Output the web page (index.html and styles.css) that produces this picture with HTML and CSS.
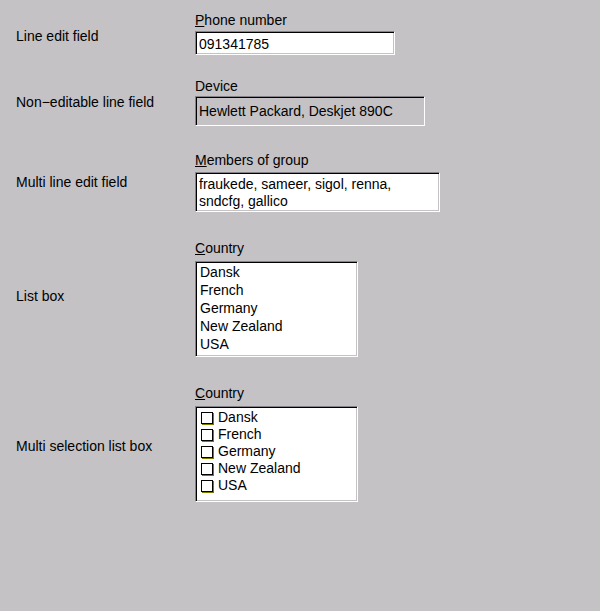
FILE: index.html
```html
<!DOCTYPE html>
<html>
<head>
<meta charset="utf-8">
<link rel="stylesheet" href="styles.css">
</head>
<body>
<div class="form">
  <div class="row">
    <div class="label label-down">Line edit field</div>
    <div class="field">
      <div class="caption cap-1"><u>P</u>hone number</div>
      <div class="sunken edit">091341785</div>
    </div>
  </div>
  <div class="row row-2">
    <div class="label">Non−editable line field</div>
    <div class="field">
      <div class="caption cap-2">Device</div>
      <div class="sunken readonly">Hewlett Packard, Deskjet 890C</div>
    </div>
  </div>
  <div class="row row-3">
    <div class="label">Multi line edit field</div>
    <div class="field">
      <div class="caption cap-3"><u>M</u>embers of group</div>
      <div class="sunken multi">fraukede, sameer, sigol, renna,<br>sndcfg, gallico</div>
    </div>
  </div>
  <div class="row row-4">
    <div class="label label-up">List box</div>
    <div class="field">
      <div class="caption cap-4"><u>C</u>ountry</div>
      <div class="sunken listbox">
        <div class="item">Dansk</div>
        <div class="item">French</div>
        <div class="item">Germany</div>
        <div class="item">New Zealand</div>
        <div class="item">USA</div>
      </div>
    </div>
  </div>
  <div class="row row-5">
    <div class="label label-down">Multi selection list box</div>
    <div class="field">
      <div class="caption cap-4"><u>C</u>ountry</div>
      <div class="sunken checklist">
        <div class="citem"><span class="check"></span>Dansk</div>
        <div class="citem"><span class="check"></span>French</div>
        <div class="citem"><span class="check"></span>Germany</div>
        <div class="citem"><span class="check"></span>New Zealand</div>
        <div class="citem"><span class="check"></span>USA</div>
      </div>
    </div>
  </div>
</div>
</body>
</html>
```
FILE: styles.css
```css
html {
  background: #c4c2c5;
  height: 100%;
}
body {
  margin: 0;
  padding: 12px 0 0 16px;
  font-family: "Liberation Sans", Arial, sans-serif;
  font-size: 14px;
  line-height: 16px;
  color: #000;
}
.form {
  display: flex;
  flex-direction: column;
}
.row {
  display: flex;
  align-items: center;
}
.row-2 { margin-top: 23px; }
.row-3 { margin-top: 26px; }
.row-4 { margin-top: 28px; }
.row-5 { margin-top: 28px; }
.label {
  width: 179px;
  flex: none;
}
.label-down { margin-top: 4px; }
.label-up { margin-bottom: 6px; }
.field {
  display: flex;
  flex-direction: column;
  align-items: flex-start;
}
.caption {
  height: 16px;
  white-space: nowrap;
}
.cap-1 { margin-bottom: 3px; }
.cap-2 { margin-bottom: 2px; }
.cap-3 { margin-bottom: 4px; }
.cap-4 { margin-bottom: 5px; }
.sunken {
  box-sizing: border-box;
  border: 1px solid;
  border-color: #858289 #ffffff #ffffff #858289;
  box-shadow: inset 1px 1px 0 #000, inset -1px -1px 0 #c4c2c5;
  background: #fff;
  white-space: nowrap;
}
.edit {
  width: 200px;
  height: 24px;
  padding: 4px 3px 0;
}
.readonly {
  width: 230px;
  height: 30px;
  padding: 6px 3px 0;
  background: transparent;
}
.multi {
  width: 245px;
  height: 40px;
  padding: 3px 3px 0;
  line-height: 17px;
}
.listbox {
  width: 163px;
  height: 96px;
  padding: 1px 4px;
}
.item {
  line-height: 18px;
}
.checklist {
  width: 163px;
  height: 96px;
  padding: 2px 5px 0;
}
.citem {
  display: flex;
  align-items: center;
  line-height: 17px;
  height: 17px;
}
.check {
  box-sizing: border-box;
  width: 12px;
  height: 12px;
  border: 1px solid #000;
  box-shadow: 1px 1px 0 #7f7a00;
  margin-right: 5px;
  flex: none;
}
```
